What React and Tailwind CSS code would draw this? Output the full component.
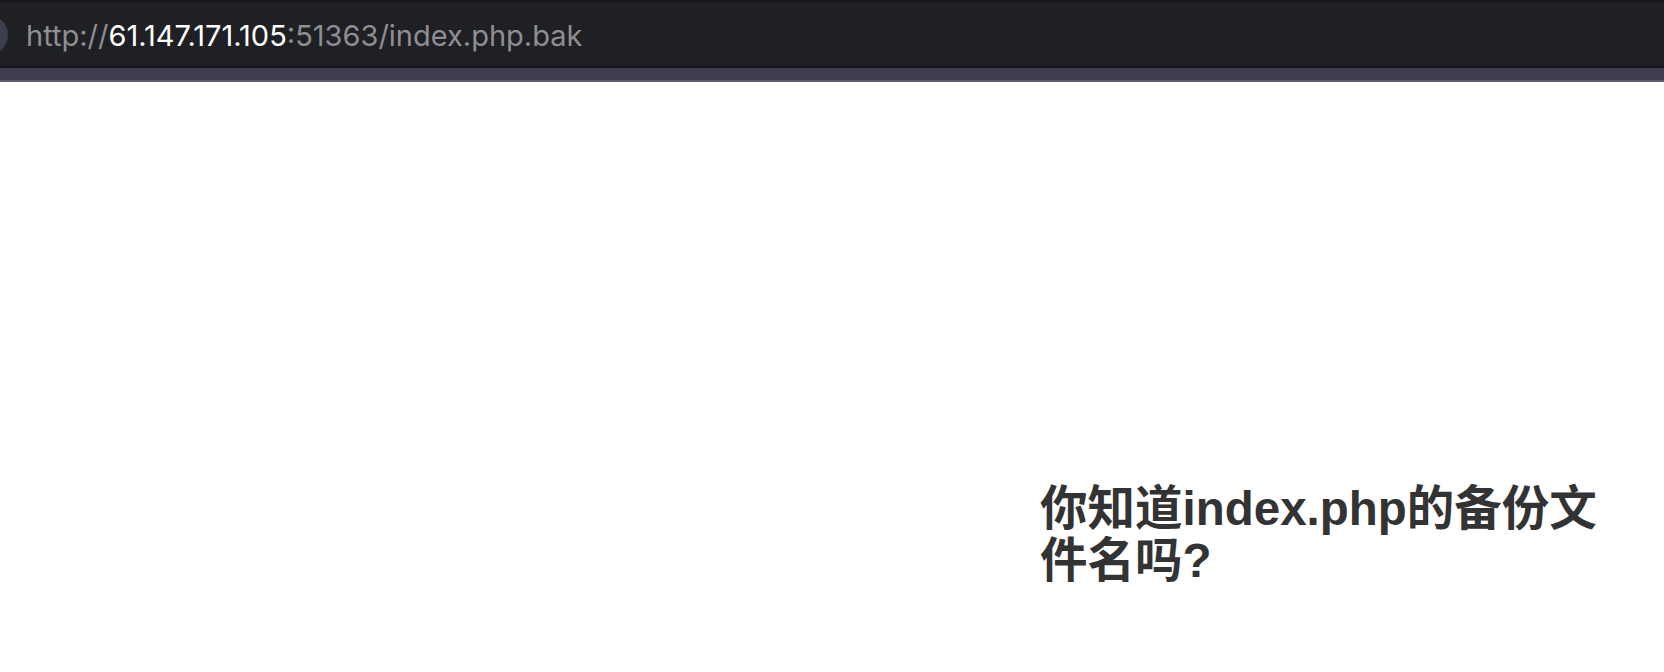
export default function App() {
  return (
    <div className="min-h-[672px] w-full bg-white flex flex-col overflow-hidden">
      {/* address bar */}
      <div className="h-[2px] bg-[#17181b]" />
      <div className="h-[64px] bg-[#1f2024] flex items-center relative">
        <div className="absolute left-[-32px] top-[13px] w-[40px] h-[40px] rounded-full bg-[#3d3d50]" />
        <div
          className="pl-[26px] pt-[3px] text-[29px] text-[#8e8e93]"
          style={{ fontFamily: "Inter, 'Liberation Sans', sans-serif" }}
        >
          http://<span className="text-white">61.147.171.105</span>:51363/index.php.bak
        </div>
      </div>
      <div className="h-[2px] bg-[#17181b]" />
      <div className="h-[12px] bg-[#3e3e50]" />
      <div className="h-[2px] bg-[#5e5e6c]" />

      {/* page */}
      <div className="flex-1 pt-[401px] pl-[1040px]">
        <h1
          className="w-[595px] text-[47.5px] leading-[52px] font-bold text-[#333333]"
          style={{ fontFamily: "'Liberation Sans', 'Noto Sans CJK SC', sans-serif" }}
        >
          你知道index.php的备份文件名吗?
        </h1>
      </div>
    </div>
  );
}
